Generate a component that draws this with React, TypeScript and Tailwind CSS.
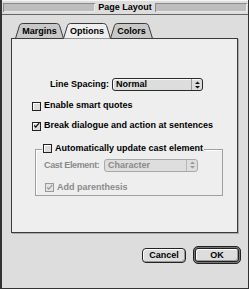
import React from 'react'

const font = { fontFamily: '"Liberation Sans", Arial, sans-serif' }

function Tab({ label, width, active }: { label: string; width: number; active?: boolean }) {
  const w = width
  return (
    <div className={`relative h-[15px] flex items-center justify-center ${active ? 'z-10' : ''}`} style={{ width: w, marginLeft: -1 }}>
      <svg className="absolute inset-0" width={w} height={16} viewBox={`0 0 ${w} 16`}>
        <path
          d={`M0.5 15.5 L4.5 2.5 Q5.2 0.5 7.5 0.5 H${w - 7.5} Q${w - 5.2} 0.5 ${w - 4.5} 2.5 L${w - 0.5} 15.5`}
          fill={active ? '#eeeeee' : '#c8c8c8'}
          stroke="#3a3a3a"
          strokeWidth="1"
        />
        {!active && <line x1="0" y1="15.5" x2={w} y2="15.5" stroke="#3a3a3a" />}
      </svg>
      <span className="relative text-[9px] font-bold text-black pt-[2px]">{label}</span>
    </div>
  )
}

function Checkbox({ checked, disabled }: { checked?: boolean; disabled?: boolean }) {
  return (
    <div
      className={`w-[9px] h-[9px] shrink-0 border flex items-center justify-center ${
        disabled ? 'border-[#9a9a9a] bg-[#e4e4e4]' : 'border-[#222] bg-[#dcdcdc] shadow-[inset_1px_1px_0_#fff]'
      }`}
    >
      {checked && (
        <svg width="9" height="9" viewBox="0 0 9 9" className="-mt-[1px]">
          <path d="M1.5 4.5 L3.5 6.5 L8 1" fill="none" stroke={disabled ? '#999' : '#111'} strokeWidth="1.6" />
        </svg>
      )}
    </div>
  )
}

function Popup({ value, width, disabled }: { value: string; width: number; disabled?: boolean }) {
  return (
    <div
      className={`h-[13px] shrink-0 rounded-[3px] border flex items-center ${
        disabled ? 'border-[#a8a8a8] bg-[#dedede] text-[#8a8a8a]' : 'border-[#2a2a2a] bg-[#dddddd] text-black shadow-[inset_1px_1px_0_#fafafa]'
      }`}
      style={{ width }}
    >
      <span className="flex-1 pl-[3px] text-[9px] font-bold leading-none">{value}</span>
      <div className={`w-[11px] h-full border-l flex items-center justify-center ${disabled ? 'border-[#b8b8b8]' : 'border-[#999]'}`}>
        <svg width="5" height="8" viewBox="0 0 5 8">
          <path d="M0 3 L2.5 0.5 L5 3 Z M0 5 L2.5 7.5 L5 5 Z" fill={disabled ? '#999' : '#111'} />
        </svg>
      </div>
    </div>
  )
}

export default function App() {
  return (
    <div className="w-[250px] h-[289px] bg-white" style={font}>
      <div className="w-[249px] h-[289px] bg-[#dddddd] border-l-[2px] border-r border-b border-[#333] flex flex-col">
        {/* Title bar */}
        <div className="h-[15px] flex items-center px-[1px] border-b border-[#666] shadow-[inset_0_1px_0_#f4f4f4]">
          <div className="flex-1 h-[9px] bg-[#bdbdbd] border-t border-l border-[#8a8a8a] shadow-[inset_-1px_-1px_0_#e8e8e8]" />
          <span className="px-[3px] text-[9px] font-bold text-black leading-none">Page Layout</span>
          <div className="flex-1 h-[9px] bg-[#bdbdbd] border-t border-l border-[#8a8a8a] shadow-[inset_-1px_-1px_0_#e8e8e8]" />
        </div>

        {/* Tabs */}
        <div className="flex pl-[14px] mt-[8px]">
          <Tab label="Margins" width={49} />
          <Tab label="Options" width={48} active />
          <Tab label="Colors" width={43} />
        </div>

        {/* Panel */}
        <div className="ml-[9px] w-[227px] h-[195px] bg-[#eeeeee] border border-[#3a3a3a] shadow-[1px_1px_0_#aaa] flex flex-col">
          <div className="flex items-center mt-[39px]">
            <span className="w-[97px] text-right text-[9px] font-bold text-black whitespace-nowrap">Line Spacing:</span>
            <div className="ml-[3px]">
              <Popup value="Normal" width={91} />
            </div>
          </div>

          <div className="flex items-center gap-[3px] ml-[20px] mt-[9px] h-[11px]">
            <Checkbox />
            <span className="text-[9px] font-bold text-black">Enable smart quotes</span>
          </div>
          <div className="flex items-center gap-[3px] ml-[20px] mt-[9px] h-[11px]">
            <Checkbox checked />
            <span className="text-[9px] font-bold text-black whitespace-nowrap">Break dialogue and action at sentences</span>
          </div>

          {/* Group box */}
          <div className="relative ml-[23px] mt-[17px] w-[188px] h-[47px] border border-[#a0a0a0] shadow-[inset_1px_1px_0_#fff] flex flex-col">
            <div className="absolute -top-[7px] left-[6px] flex items-center gap-[3px] bg-[#eeeeee] px-[1px]">
              <Checkbox />
              <span className="text-[9px] font-bold text-black leading-[11px] whitespace-nowrap">Automatically update cast element</span>
            </div>
            <div className="flex items-center mt-[9px] pl-[8px]">
              <span className="w-[60px] shrink-0 text-[9px] font-bold text-[#8a8a8a] whitespace-nowrap tracking-[-0.35px]">Cast Element:</span>
              <Popup value="Character" width={94} disabled />
            </div>
            <div className="flex items-center gap-[3px] pl-[9px] mt-[9px]">
              <Checkbox checked disabled />
              <span className="text-[9px] font-bold text-[#8a8a8a]">Add parenthesis</span>
            </div>
          </div>
        </div>

        {/* Buttons */}
        <div className="flex items-center justify-end pr-[7px] mt-[13px] gap-[7px]">
          <button className="w-[44px] h-[15px] rounded-[4px] border border-[#222] bg-[#dddddd] shadow-[inset_1px_1px_0_#fff,inset_-1px_-1px_0_#999] text-[9px] font-bold text-black leading-none">
            Cancel
          </button>
          <div className="w-[48px] h-[18px] rounded-[5px] border border-[#222] bg-[#777] p-[1px] flex">
            <button className="flex-1 rounded-[3px] border border-[#222] bg-[#dddddd] shadow-[inset_1px_1px_0_#fff,inset_-1px_-1px_0_#999] text-[9px] font-bold text-black leading-none">
              OK
            </button>
          </div>
        </div>
      </div>
    </div>
  )
}
